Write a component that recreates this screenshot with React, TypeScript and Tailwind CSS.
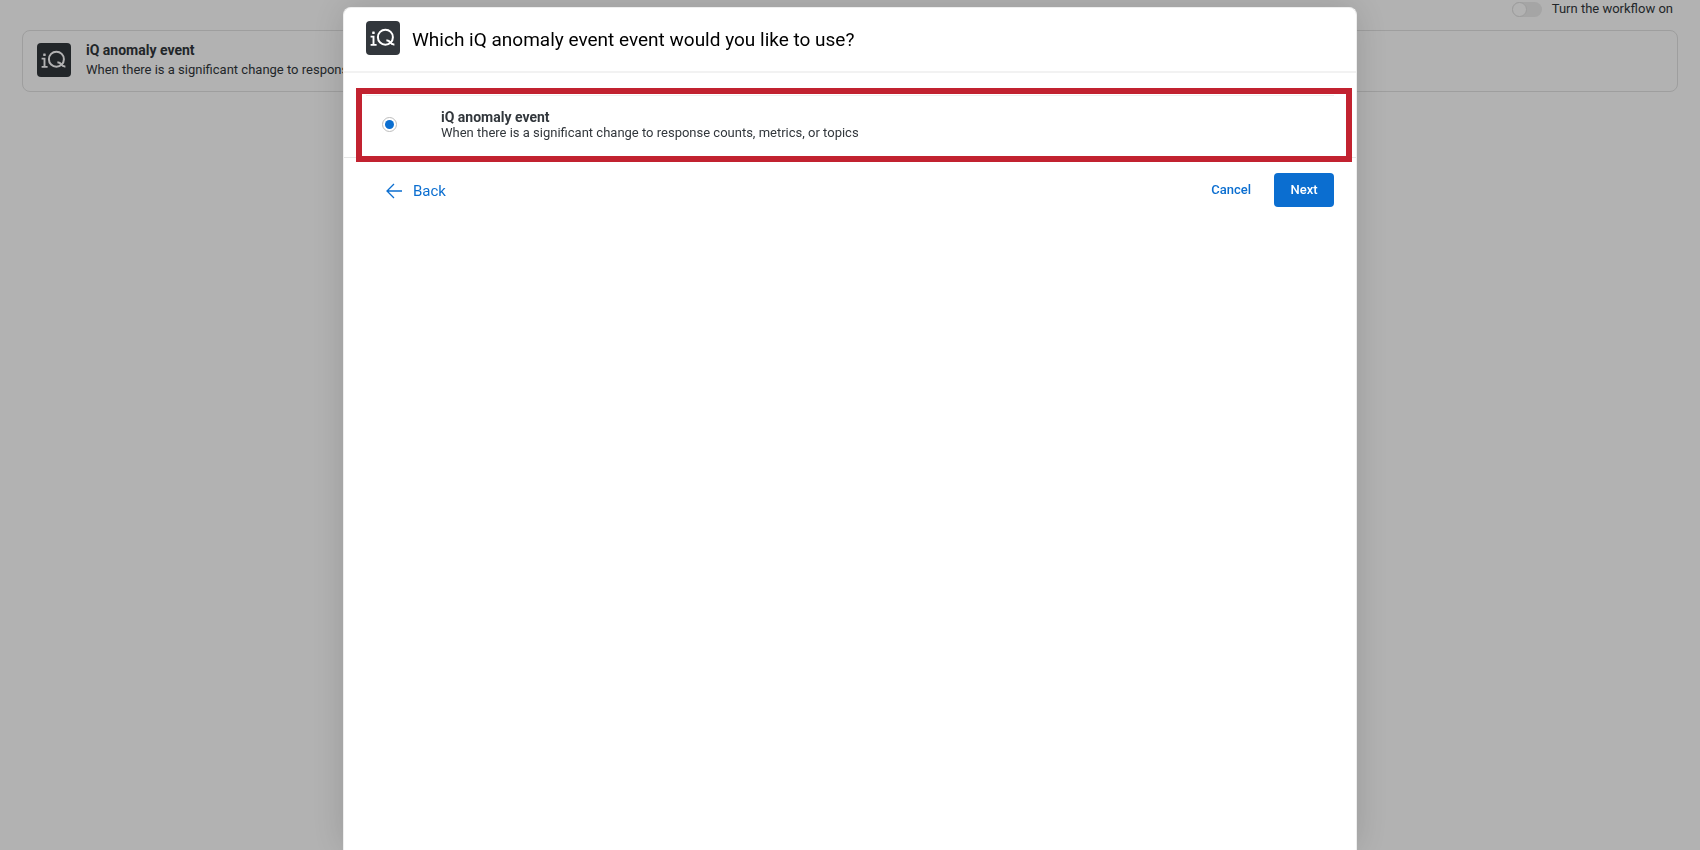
import { useState } from 'react';

function IqLogo() {
  return (
    <svg viewBox="0 0 34 34" className="size-[34px] shrink-0" aria-hidden="true">
      <rect width="34" height="34" rx="4" fill="#32373c" />
      <g fill="none" stroke="#fff" strokeWidth="2">
        <path d="M4.6 15.6h2.9v8.2M4.6 23.9h6" strokeWidth="1.9" />
        <circle cx="19.4" cy="16.2" r="7.5" />
        <path d="M20.4 19.2c2 .2 3.2 1.2 4 2.4.8 1.3 1.9 2 4 1.8" strokeWidth="2" />
      </g>
      <rect x="6.2" y="10.4" width="2.5" height="2.5" rx="0.5" fill="#fff" />
    </svg>
  );
}

function BackArrow() {
  return (
    <svg viewBox="0 0 16 16" className="size-4" fill="none" stroke="currentColor" strokeWidth="1.3" aria-hidden="true">
      <path d="M8 1 1 8l7 7M1 8h15" />
    </svg>
  );
}

const DESCRIPTION = 'When there is a significant change to response counts, metrics, or topics';

function WorkflowPage() {
  const [on, setOn] = useState(false);
  return (
    <main className="flex flex-col gap-3 px-[22px]">
      <label className="flex h-[18px] items-center justify-end gap-[10px] pr-[5px] text-[13px] leading-[18px]">
        <input
          type="checkbox"
          role="switch"
          checked={on}
          onChange={() => setOn(!on)}
          className="h-[15px] w-[30px] appearance-none rounded-full bg-[#ececec] before:block before:size-[15px] before:rounded-full before:border before:border-[#e0e0e0] before:bg-white checked:bg-[#0b6ed0] checked:before:ml-[15px]"
        />
        Turn the workflow on
      </label>
      <section className="flex h-[62px] items-center gap-[15px] rounded-lg border border-[#e2e2e2] px-[14px] pb-[2px]">
        <IqLogo />
        <div className="text-[13px] leading-[19px] whitespace-nowrap">
          <h2 className="text-[14px] leading-[19px] font-bold">iQ anomaly event</h2>
          <p>{DESCRIPTION}</p>
        </div>
      </section>
    </main>
  );
}

function EventDialog() {
  const [selected, setSelected] = useState('anomaly');
  return (
    <div className="fixed inset-0 flex justify-center bg-black/30 pt-[7px]">
      <div
        role="dialog"
        aria-modal="true"
        aria-labelledby="dialog-title"
        className="w-full max-w-[1014px] rounded-t-lg border border-b-0 border-[#eeeeee] bg-white shadow-[0_0_36px_rgba(0,0,0,0.15)]"
      >
        <header className="flex h-[65px] items-center gap-3 border-b-2 border-[#f2f2f2] px-[22px] pb-1">
          <IqLogo />
          <h1 id="dialog-title" className="pt-1 text-[19px] leading-6 text-black">
            Which iQ anomaly event event would you like to use?
          </h1>
        </header>

        <div className="relative border-b border-[#e6e6e6] px-[22px] pt-[22px]">
          <label className="flex h-[62px] items-center border-t border-[#f0f0f0] pb-1 pl-4">
            <input
              type="radio"
              name="event"
              value="anomaly"
              checked={selected === 'anomaly'}
              onChange={(e) => setSelected(e.target.value)}
              className="grid size-[15px] appearance-none place-items-center rounded-full border border-[#bdbdbd] bg-white checked:before:size-[9px] checked:before:rounded-full checked:before:bg-[#0b6ed0]"
            />
            <span className="pl-11 text-[13px] leading-4">
              <span className="block text-[14px] leading-4 font-bold">iQ anomaly event</span>
              <span className="block">{DESCRIPTION}</span>
            </span>
          </label>
          <div className="pointer-events-none absolute top-[15px] right-1 -bottom-[5px] left-3 border-6 border-[#c22230]" />
        </div>

        <footer className="flex items-center justify-between px-[22px] py-[15px] text-[#0b6ed0]">
          <button type="button" className="flex items-center gap-[11px] pt-0.5 pl-5 text-[15px] leading-6">
            <BackArrow />
            Back
          </button>
          <div className="flex items-center gap-[7px] text-[13px] font-medium">
            <button type="button" className="h-[34px] px-4">
              Cancel
            </button>
            <button type="button" className="h-[34px] w-[60px] rounded bg-[#0b6ed0] text-white">
              Next
            </button>
          </div>
        </footer>
      </div>
    </div>
  );
}

export default function App() {
  return (
    <div className="min-h-screen overflow-hidden bg-white font-['Roboto',sans-serif] text-[#32373c]">
      <WorkflowPage />
      <EventDialog />
    </div>
  );
}
